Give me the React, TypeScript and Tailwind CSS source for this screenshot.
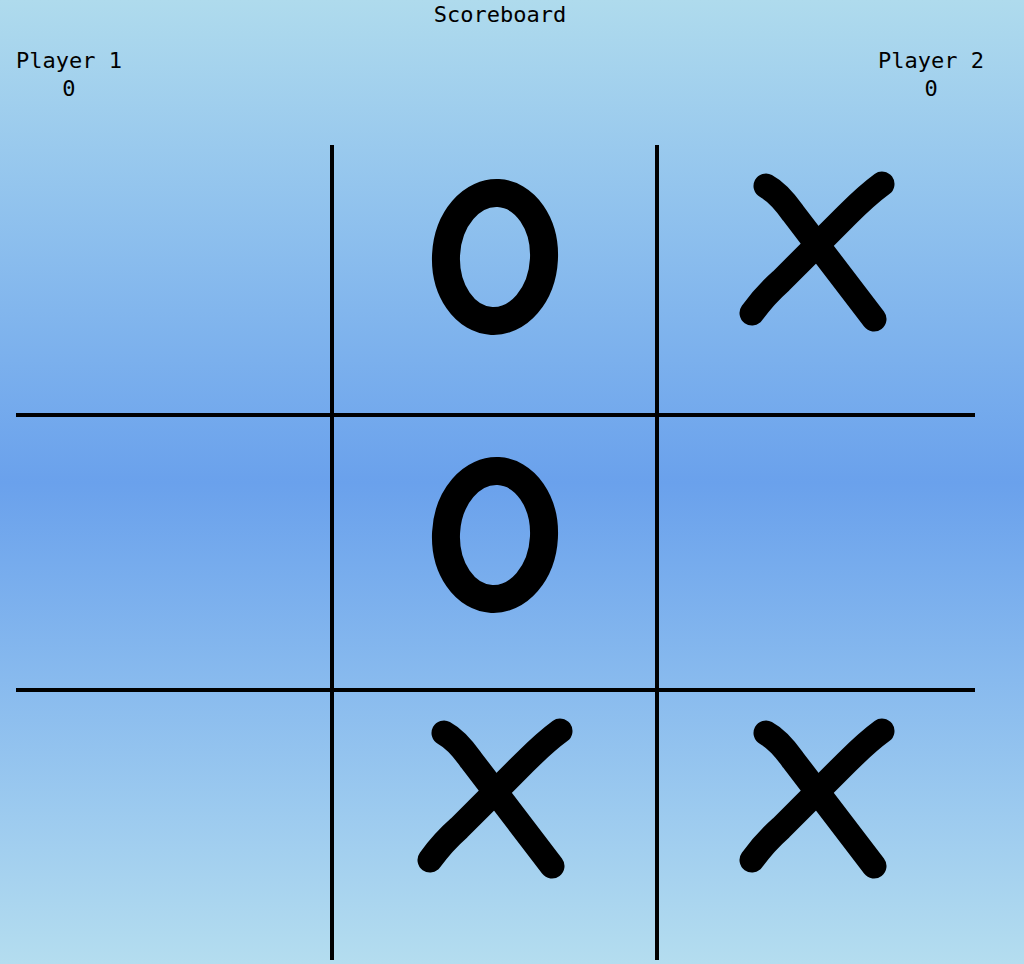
import React from 'react';

type Mark = 'X' | 'O' | '';

const board: Mark[] = ['', 'O', 'X', '', 'O', '', '', 'X', 'X'];

function OMark() {
  return (
    <svg width="130" height="160" viewBox="0 0 130 160" fill="none">
      <ellipse
        cx="65"
        cy="80"
        rx="49"
        ry="64"
        transform="rotate(3 65 80)"
        stroke="black"
        strokeWidth="28"
      />
    </svg>
  );
}

function XMark() {
  return (
    <svg width="164" height="170" viewBox="0 0 164 170" fill="none">
      <path
        d="M31 19 Q44 26 58 46 L139 152"
        stroke="black"
        strokeWidth="25"
        strokeLinecap="round"
        strokeLinejoin="round"
      />
      <path
        d="M147 17 Q132 28 112 48 L46 114 Q30 128 17 146"
        stroke="black"
        strokeWidth="25"
        strokeLinecap="round"
        strokeLinejoin="round"
      />
    </svg>
  );
}

function Cell({ mark, index }: { mark: Mark; index: number }) {
  const row = Math.floor(index / 3);
  const col = index % 3;
  const right = col < 2 ? 'border-r-4' : '';
  const bottom = row < 2 ? 'border-b-4' : '';
  // the mark images sit a little above the middle of each square
  const pad = mark === 'X' ? 'pt-[22px]' : row === 0 ? 'pt-[32px]' : 'pt-[38px]';

  return (
    <div className={`flex justify-center border-black ${right} ${bottom} ${pad}`}>
      {mark === 'X' && <XMark />}
      {mark === 'O' && <OMark />}
    </div>
  );
}

export default function App() {
  return (
    <div className="min-h-screen bg-gradient-to-b from-[#afdbed] via-[#6aa1ec] to-[#b4ddef] text-black font-['DejaVu_Sans_Mono',monospace] text-[22px] leading-[28px]">
      {/* Scoreboard */}
      <div className="ml-4 w-[968px]">
        <div className="pt-px text-center">Scoreboard</div>
        <div className="mt-[18px] flex justify-between">
          <div className="text-center">
            <div>Player 1</div>
            <div>0</div>
          </div>
          <div className="text-center">
            <div>Player 2</div>
            <div>0</div>
          </div>
        </div>
      </div>

      {/* Board */}
      <div className="ml-4 mt-[42px] grid grid-cols-[318px_325px_316px] grid-rows-[272px_275px_268px]">
        {board.map((mark, i) => (
          <Cell key={i} mark={mark} index={i} />
        ))}
      </div>
    </div>
  );
}
